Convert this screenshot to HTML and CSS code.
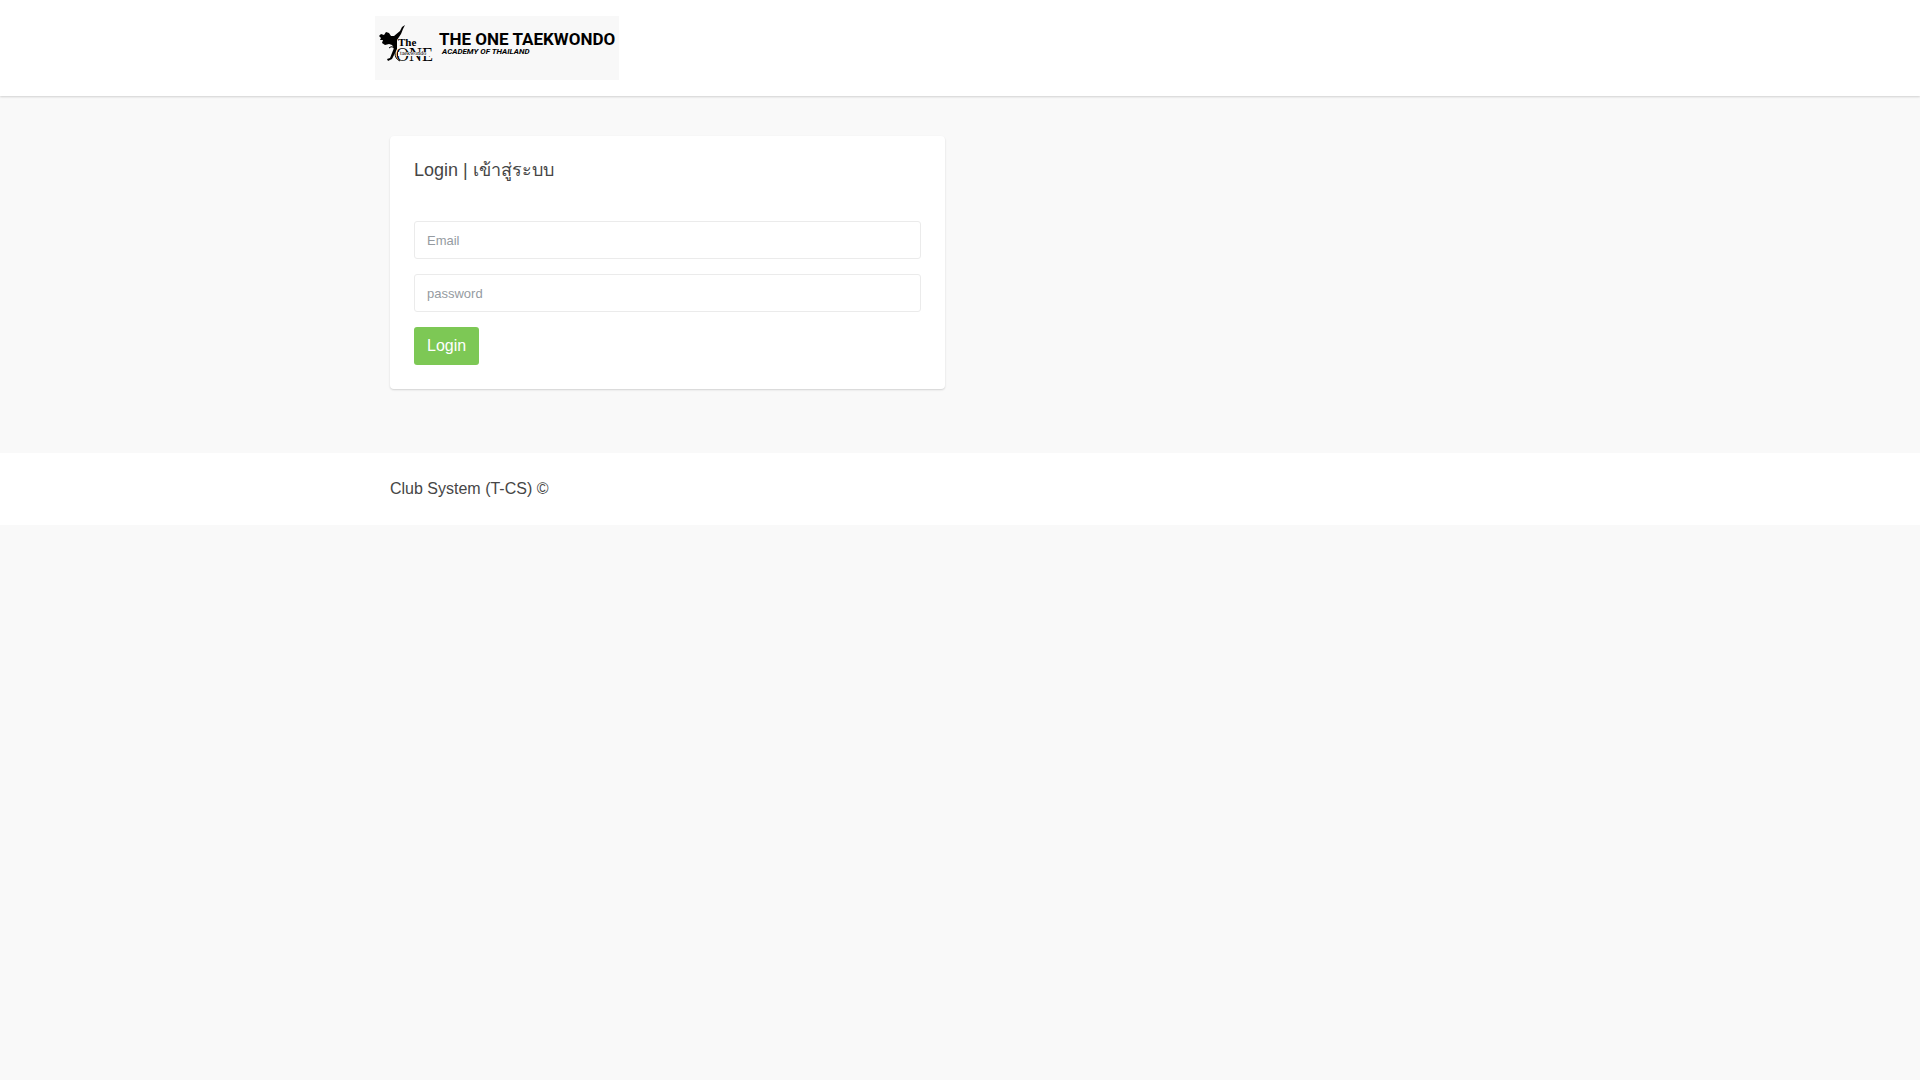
FILE: index.html
```html
<!DOCTYPE html>
<html lang="th">
<head>
<meta charset="utf-8">
<meta name="viewport" content="width=device-width, initial-scale=1">
<title>Club System</title>
<link rel="stylesheet" href="styles.css">
</head>
<body>
<header class="site-header">
  <div class="container">
    <a class="logo" href="#" aria-label="The One Taekwondo Academy of Thailand">
      <svg class="logo-art" viewBox="0 0 244 64" width="244" height="64">
        <path d="M30 9 L27 11 L25 15 L19 20 L16 20 L14 17 L11 16 L9 19 L6 18 L4 20 L6 22 L5 24 L8 24 L7 27 L10 29 L14 28 L17 29 L19 32 L17 37 L15 42 L12 43 L13 45 L17 43 L20 37 L22 33 L22 28 L22 24 L26 18 L28 13Z"/>
        <path d="M14 32 Q16 30 18 31 Q21 33 20 37 Q20 43 25 45" fill="none" stroke="#000" stroke-width="1"/>
        <text class="mark-the" x="23" y="30">The</text>
        <text class="mark-one" x="21" y="45">ONE</text>
        <rect x="23" y="36" width="34" height="4" fill="#f8f8f8"/>
        <text class="mark-small" x="25" y="39">taekwondo</text>
        <text class="brand-name" x="64" y="29">THE ONE TAEKWONDO</text>
        <text class="brand-sub" x="67" y="38">ACADEMY OF THAILAND</text>
      </svg>
    </a>
  </div>
</header>
<main class="container main">
  <section class="card">
    <h1 class="card-title">Login | เข้าสู่ระบบ</h1>
    <form class="login-form">
      <input class="field" type="email" placeholder="Email" aria-label="Email">
      <input class="field" type="password" placeholder="password" aria-label="password">
      <button class="button" type="submit">Login</button>
    </form>
  </section>
</main>
<footer class="site-footer">
  <div class="container">
    <p class="copyright">Club System (T-CS) ©</p>
  </div>
</footer>
</body>
</html>
```
FILE: styles.css
```css
* { box-sizing: border-box; }
body {
  margin: 0;
  background: #f9f9f9;
  color: #464646;
  font: 16px/24px "Liberation Sans", Arial, sans-serif;
}
.container { max-width: 1170px; margin: 0 auto; }
.site-header {
  background: #fff;
  padding: 16px 0;
  box-shadow: 0 1px 2px rgba(0, 0, 0, 0.16);
}
.logo { display: block; width: 244px; background: #f8f8f8; color: #000; }
.logo-art { display: block; fill: currentColor; }
.mark-the { font: bold 11px "Liberation Serif", serif; }
.mark-one { font: 18px "Liberation Serif", serif; }
.mark-small { font: 6px "Liberation Serif", serif; }
.brand-name { font: bold 17px Roboto, sans-serif; }
.brand-sub { font: italic bold 8px Roboto, sans-serif; }
.main { padding: 40px 15px 64px; }
.card {
  max-width: 555px;
  padding: 24px;
  background: #fff;
  border-radius: 4px;
  box-shadow: 0 1px 2px rgba(0, 0, 0, 0.16);
}
.card-title { margin: 0 0 40px; font-size: 18px; line-height: 21px; font-weight: 400; }
.login-form { display: flex; flex-direction: column; align-items: flex-start; gap: 15px; }
.field {
  width: 100%;
  height: 38px;
  padding: 0 12px;
  border: 1px solid #ebebeb;
  border-radius: 3px;
  background: #fff;
  color: #414141;
  font: 13px "Liberation Sans", Arial, sans-serif;
}
.field::placeholder { color: #959ba1; }
.button {
  height: 38px;
  padding: 0 13px;
  border: 0;
  border-radius: 3px;
  background: #7dc855;
  color: #fff;
  font: 16px "Liberation Sans", Arial, sans-serif;
}
.site-footer { background: #fff; padding: 24px 0; }
.site-footer .container { padding: 0 15px; }
.copyright { margin: 0; }
```
